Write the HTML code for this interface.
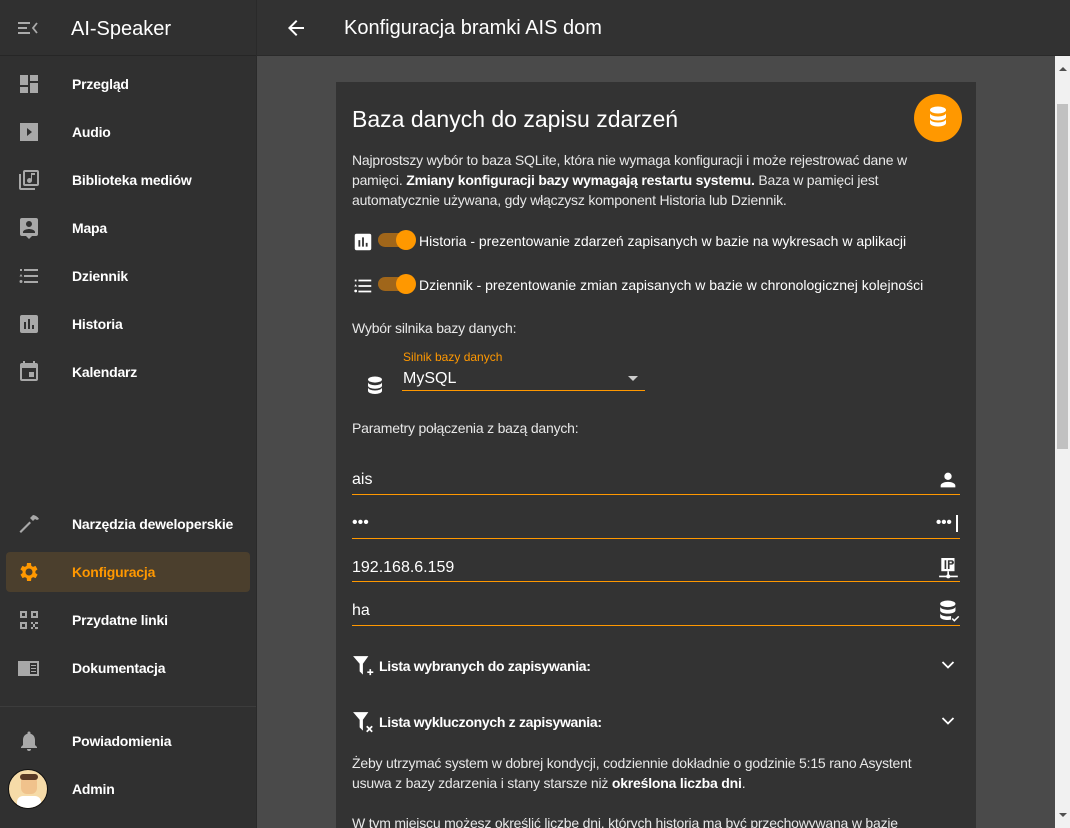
<!DOCTYPE html>
<html><head><meta charset="utf-8"><style>
*{margin:0;padding:0;box-sizing:border-box}
html,body{width:1070px;height:828px;overflow:hidden}
body{background:#4a4a4a;font-family:"Liberation Sans",sans-serif;color:#e1e1e1;position:relative}
.side{position:absolute;left:0;top:0;width:257px;height:828px;background:#303030;border-right:1px solid #2a2a2a}
.sh{height:56px;border-bottom:1px solid #262626;display:flex;align-items:center}
.sh .t{position:absolute;left:71px;top:18px;font-size:20px;color:#fff}
.item{position:absolute;left:0;width:256px;height:40px;display:flex;align-items:center;font-size:14px;font-weight:bold;color:#fff;letter-spacing:-0.2px}
.item svg{position:absolute;left:17px;top:8px;width:24px;height:24px;fill:#a8a8a8}
.item span{position:absolute;left:72px}
.sel{left:6px;width:244px;background:#4b3f2d;border-radius:4px}
.sel span{left:66px;color:#ff9800}
.sel svg{left:11px;fill:#ff9800}
.top{position:absolute;left:257px;top:0;width:813px;height:56px;background:#323232;border-bottom:1px solid #2a2a2a}
.top .t{position:absolute;left:87px;top:17px;font-size:20px;color:#fff}
.card{position:absolute;left:336px;top:82px;width:640px;height:746px;background:#333;overflow:hidden}
.abs{position:absolute}
.p{font-size:14px;line-height:20px;color:#e8e8e8;letter-spacing:-0.2px}
.sw{position:absolute;width:36px;height:14px;border-radius:7px;background:#a0661a}
.sw:after{content:"";position:absolute;right:-2px;top:-3px;width:20px;height:20px;border-radius:50%;background:#ff9800}
.line{position:absolute;left:16px;width:608px;height:1px;background:#ff9800}
.fv{position:absolute;left:16px;font-size:16px;color:#fff}
.sb{position:absolute;left:1055px;top:56px;width:15px;height:772px;background:#f1f1f1}
</style></head><body>
<div class="side">
 <div class="sh">
  <svg style="position:absolute;left:18px;top:20px" width="20" height="16" viewBox="0 0 20 16" fill="#aaa"><rect x="0" y="2" width="12" height="2"/><rect x="0" y="7" width="9" height="2"/><rect x="0" y="12" width="12" height="2"/><path d="M19 3l-4 5 4 5" stroke="#aaa" stroke-width="1.8" fill="none"/></svg>
  <div class="t">AI-Speaker</div>
 </div>
 <div class="item" style="top:64px"><svg viewBox="0 0 24 24"><path d="M3 13h8V3H3zm0 8h8v-6H3zm10 0h8V11h-8zm0-18v6h8V3z"/></svg><span>Przegląd</span></div>
 <div class="item" style="top:112px"><svg viewBox="0 0 24 24"><path d="M3 3h18v18H3z"/><path d="M10 8l5 4-5 4z" fill="#303030"/></svg><span>Audio</span></div>
 <div class="item" style="top:160px"><svg viewBox="0 0 24 24"><path d="M4 6H2v14a2 2 0 002 2h14v-2H4zm16-4H8a2 2 0 00-2 2v12a2 2 0 002 2h12a2 2 0 002-2V4a2 2 0 00-2-2zm0 14H8V4h12zM12.5 15a2.5 2.5 0 002.5-2.5V7h3V5h-4v5.5a2.5 2.5 0 10-1.5 4.5z"/></svg><span>Biblioteka mediów</span></div>
 <div class="item" style="top:208px"><svg viewBox="0 0 24 24"><path d="M19 2H5a2 2 0 00-2 2v14a2 2 0 002 2h4l3 3 3-3h4a2 2 0 002-2V4a2 2 0 00-2-2zm-7 3a3 3 0 110 6 3 3 0 010-6zm6 12H6v-1c0-2 4-3 6-3s6 1 6 3z"/></svg><span>Mapa</span></div>
 <div class="item" style="top:256px"><svg viewBox="0 0 24 24"><path d="M7 5h14v2H7zm0 6h14v2H7zm0 6h14v2H7zM3 5h2v2H3zm1 5l1.5 2.5h-3zM4 16a1.5 1.5 0 110 3 1.5 1.5 0 010-3z"/></svg><span>Dziennik</span></div>
 <div class="item" style="top:304px"><svg viewBox="0 0 24 24"><path d="M19 3H5a2 2 0 00-2 2v14a2 2 0 002 2h14a2 2 0 002-2V5a2 2 0 00-2-2zM9 17H7v-7h2zm4 0h-2V7h2zm4 0h-2v-4h2z"/></svg><span>Historia</span></div>
 <div class="item" style="top:352px"><svg viewBox="0 0 24 24"><path d="M17 12h-5v5h5zM16 1v2H8V1H6v2H5a2 2 0 00-2 2v14a2 2 0 002 2h14a2 2 0 002-2V5a2 2 0 00-2-2h-1V1zm3 18H5V8h14z"/></svg><span>Kalendarz</span></div>
 <div class="item" style="top:504px"><svg viewBox="0 0 24 24"><path d="M4 21l10-10-1.5-1.5L2.5 19.5zM13 6l3-3c2 0 5 2 6 4l-2 1-2-1-2 2z"/></svg><span>Narzędzia deweloperskie</span></div>
 <div class="item sel" style="top:552px"><svg viewBox="0 0 24 24"><path d="M19.4 13a7.5 7.5 0 000-2l2.1-1.6-2-3.5-2.5 1a7 7 0 00-1.7-1L15 3h-4l-.4 2.9a7 7 0 00-1.7 1l-2.5-1-2 3.5L6.6 11a7.5 7.5 0 000 2l-2.1 1.6 2 3.5 2.5-1a7 7 0 001.7 1L11 21h4l.4-2.9a7 7 0 001.7-1l2.5 1 2-3.5zM13 15.5a3.5 3.5 0 110-7 3.5 3.5 0 010 7z" transform="translate(-1 0)"/></svg><span>Konfiguracja</span></div>
 <div class="item" style="top:600px"><svg viewBox="0 0 24 24"><path d="M3 3h7v7H3zm2 2v3h3V5zm9-2h7v7h-7zm2 2v3h3V5zM3 14h7v7H3zm2 2v3h3v-3zm9-2h2v2h-2zm4 0h3v2h-3zm-2 2h2v3h-2zm2 3h3v2h-3zm-4 0h2v2h-2z"/></svg><span>Przydatne linki</span></div>
 <div class="item" style="top:648px"><svg viewBox="0 0 24 24"><path d="M1 5h21v15H1z"/><path d="M13 7h7v11h-7z" fill="#303030"/><path d="M14 9h5v1h-5zm0 3h5v1h-5zm0 3h5v1h-5z"/></svg><span>Dokumentacja</span></div>
 <div style="position:absolute;left:0;top:706px;width:256px;height:1px;background:#3c3c3c"></div>
 <div class="item" style="top:721px"><svg viewBox="0 0 24 24"><path d="M12 22a2 2 0 002-2h-4a2 2 0 002 2zm6-6v-5c0-3-1.6-5.6-4.5-6.3V4a1.5 1.5 0 00-3 0v.7C7.6 5.4 6 8 6 11v5l-2 2v1h16v-1z"/></svg><span>Powiadomienia</span></div>
 <div class="item" style="top:769px"><div style="position:absolute;left:8px;top:0;width:40px;height:40px;border-radius:50%;background:#f6dba8;border:1px solid #111;overflow:hidden"><div style="position:absolute;left:12px;top:6px;width:16px;height:18px;border-radius:6px;background:#f0c28c"></div><div style="position:absolute;left:11px;top:4px;width:18px;height:6px;background:#5a3a26;border-radius:4px"></div><div style="position:absolute;left:8px;top:26px;width:24px;height:14px;background:#fff;border-radius:6px 6px 0 0"></div></div><span>Admin</span></div>
</div>
<div class="top">
 <svg style="position:absolute;left:27px;top:16px" width="24" height="24" viewBox="0 0 24 24" fill="#fff"><path d="M20 11H7.8l5.6-5.6L12 4l-8 8 8 8 1.4-1.4L7.8 13H20z"/></svg>
 <div class="t">Konfiguracja bramki AIS dom</div>
</div>
<div class="card">
 <div class="abs" style="left:16px;top:24px;font-size:23px;color:#fff">Baza danych do zapisu zdarzeń</div>
 <div class="abs" style="left:578px;top:12px;width:48px;height:48px;border-radius:50%;background:#ff9800">
  <svg style="position:absolute;left:14px;top:12px" width="20" height="24" viewBox="0 0 20 24" fill="#fff"><ellipse cx="10" cy="4" rx="8" ry="3.5"/><path d="M2 7c0 2 3.6 3.5 8 3.5S18 9 18 7v4c0 2-3.6 3.5-8 3.5S2 13 2 11zm0 6c0 2 3.6 3.5 8 3.5s8-1.5 8-3.5v4c0 2-3.6 3.5-8 3.5S2 19 2 17z"/></svg>
 </div>
 <div class="abs p" style="left:16px;top:68px;width:600px">Najprostszy wybór to baza SQLite, która nie wymaga konfiguracji i może rejestrować dane w pamięci. <b style="color:#fff">Zmiany konfiguracji bazy wymagają restartu systemu.</b> Baza w pamięci jest automatycznie używana, gdy włączysz komponent Historia lub Dziennik.</div>
 <svg class="abs" style="left:16px;top:149px" width="22" height="22" viewBox="0 0 24 24" fill="#fff"><path d="M19 3H5a2 2 0 00-2 2v14a2 2 0 002 2h14a2 2 0 002-2V5a2 2 0 00-2-2zM9 17H7v-7h2zm4 0h-2V7h2zm4 0h-2v-4h2z"/></svg>
 <div class="sw" style="left:42px;top:151px"></div>
 <div class="abs p" style="left:83px;top:149px;color:#fff;letter-spacing:0">Historia - prezentowanie zdarzeń zapisanych w bazie na wykresach w aplikacji</div>
 <svg class="abs" style="left:16px;top:193px" width="22" height="22" viewBox="0 0 24 24" fill="#fff"><path d="M7 5h14v2H7zm0 6h14v2H7zm0 6h14v2H7zM3 5h2v2H3zm1 5l1.5 2.5h-3zM4 16a1.5 1.5 0 110 3 1.5 1.5 0 010-3z"/></svg>
 <div class="sw" style="left:42px;top:195px"></div>
 <div class="abs p" style="left:83px;top:193px;color:#fff;letter-spacing:0">Dziennik - prezentowanie zmian zapisanych w bazie w chronologicznej kolejności</div>
 <div class="abs p" style="left:16px;top:236px">Wybór silnika bazy danych:</div>
 <svg class="abs" style="left:30px;top:294px" width="18" height="21" viewBox="0 0 20 24" fill="#fff"><ellipse cx="10" cy="4" rx="8" ry="3.5"/><path d="M2 7c0 2 3.6 3.5 8 3.5S18 9 18 7v4c0 2-3.6 3.5-8 3.5S2 13 2 11zm0 6c0 2 3.6 3.5 8 3.5s8-1.5 8-3.5v4c0 2-3.6 3.5-8 3.5S2 19 2 17z"/></svg>
 <div class="abs" style="left:67px;top:268px;font-size:12px;color:#ff9800">Silnik bazy danych</div>
 <div class="abs" style="left:67px;top:288px;font-size:16px;color:#fff">MySQL</div>
 <div class="abs" style="left:292px;top:294px;border-left:5px solid transparent;border-right:5px solid transparent;border-top:5px solid #ccc"></div>
 <div class="abs" style="left:66px;top:308px;width:243px;height:1px;background:#ff9800"></div>
 <div class="abs p" style="left:16px;top:336px">Parametry połączenia z bazą danych:</div>
 <div class="fv" style="top:389px">ais</div>
 <svg class="abs" style="left:601px;top:387px" width="22" height="22" viewBox="0 0 24 24" fill="#fff"><path d="M12 4a4 4 0 110 8 4 4 0 010-8zm0 10c4.4 0 8 1.8 8 4v2H4v-2c0-2.2 3.6-4 8-4z"/></svg>
 <div class="line" style="top:412px"></div>
 <div class="fv" style="top:432px">•••</div>
 <div class="abs" style="left:600px;top:432px;color:#fff;font-size:15px;font-weight:bold">•••</div>
 <div class="abs" style="left:620px;top:433px;width:2px;height:17px;background:#fff"></div>
 <div class="line" style="top:456px"></div>
 <div class="fv" style="top:477px">192.168.6.159</div>
 <svg class="abs" style="left:602px;top:476px" width="22" height="22" viewBox="0 0 20 20" fill="#fff"><path d="M3 0h12v12H3z"/><path d="M6 2h1.5v8H6zm3 0h3.5a2 2 0 010 4H10.5v4H9zm1.5 1.3v1.5h2v-1.5z" fill="#333"/><path d="M8.5 12h1.5v3H8.5zM1 16h17v1.5H1z"/><circle cx="9.3" cy="16.7" r="1.8"/></svg>
 <div class="line" style="top:499px"></div>
 <div class="fv" style="top:520px">ha</div>
 <svg class="abs" style="left:603px;top:518px" width="22" height="24" viewBox="0 0 20 22" fill="#fff"><ellipse cx="8" cy="3.5" rx="7" ry="3"/><path d="M1 6c0 1.8 3 3 7 3s7-1.2 7-3v3.5c0 1.8-3 3-7 3s-7-1.2-7-3zm0 6c0 1.8 3 3 7 3 1 0 2-.1 3-.3V18c-1 .2-2 .3-3 .3-4 0-7-1.2-7-3z"/><path d="M12 17l2 2 4-4" stroke="#fff" stroke-width="1.4" fill="none"/></svg>
 <div class="line" style="top:543px"></div>
 <svg class="abs" style="left:16px;top:573px" width="24" height="24" viewBox="0 0 22 22" fill="#fff"><path d="M1 1h14l-5 7v10l-3-3V8z"/><path d="M14 15h2v-2h1.5v2h2v1.5h-2v2H16v-2h-2z"/></svg>
 <div class="abs" style="left:43px;top:576px;font-size:14px;font-weight:bold;color:#fff;letter-spacing:-0.3px">Lista wybranych do zapisywania:</div>
 <svg class="abs" style="left:605px;top:578px" width="14" height="10" viewBox="0 0 14 10"><path d="M1.5 2l5.5 5.5L12.5 2" stroke="#fff" stroke-width="1.8" fill="none"/></svg>
 <svg class="abs" style="left:16px;top:629px" width="24" height="24" viewBox="0 0 22 22" fill="#fff"><path d="M1 1h14l-5 7v10l-3-3V8z"/><path d="M13.5 14l5 5m0-5l-5 5" stroke="#fff" stroke-width="1.6"/></svg>
 <div class="abs" style="left:43px;top:632px;font-size:14px;font-weight:bold;color:#fff;letter-spacing:-0.3px">Lista wykluczonych z zapisywania:</div>
 <svg class="abs" style="left:605px;top:634px" width="14" height="10" viewBox="0 0 14 10"><path d="M1.5 2l5.5 5.5L12.5 2" stroke="#fff" stroke-width="1.8" fill="none"/></svg>
 <div class="abs p" style="left:16px;top:671px;width:585px">Żeby utrzymać system w dobrej kondycji, codziennie dokładnie o godzinie 5:15 rano Asystent usuwa z bazy zdarzenia i stany starsze niż <b style="color:#fff">określona liczba dni</b>.</div>
 <div class="abs p" style="left:16px;top:731px;width:600px;white-space:nowrap">W tym miejscu możesz określić liczbę dni, których historia ma być przechowywana w bazie</div>
</div>
<div class="sb">
 <div class="abs" style="left:4px;top:11px;border-left:4px solid transparent;border-right:4px solid transparent;border-bottom:4px solid #505050"></div>
 <div class="abs" style="left:2px;top:48px;width:11px;height:345px;background:#c1c1c1"></div>
 <div class="abs" style="left:4px;top:757px;border-left:4px solid transparent;border-right:4px solid transparent;border-top:4px solid #505050"></div>
</div>
</body></html>
